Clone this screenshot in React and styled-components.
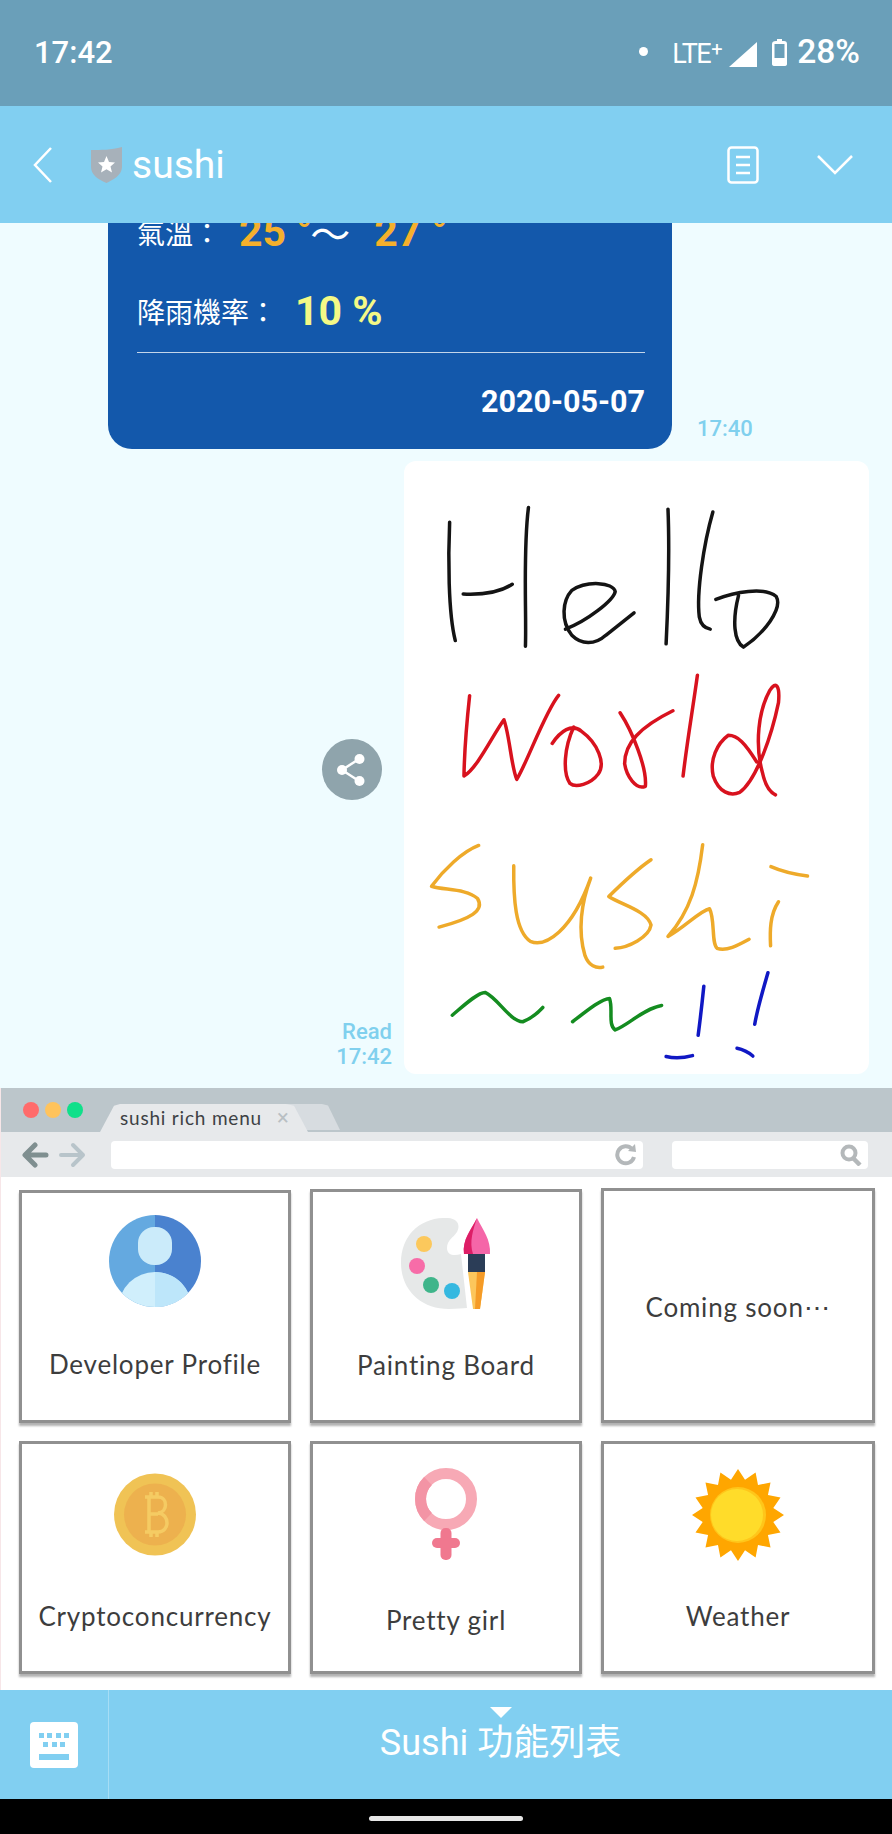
import React from "react";
import styled, { createGlobalStyle } from "styled-components";

const GlobalStyle = createGlobalStyle`
  html, body {
    margin: 0;
    padding: 0;
    background: #000;
  }
  * {
    box-sizing: border-box;
  }
`;

const LATIN = `Roboto, "Noto Sans CJK TC", sans-serif`;
const CJK = `"Noto Sans CJK TC", Roboto, sans-serif`;

//Strokes of the hand drawing, in a 1233 x 1502 space
const DRAWING = [
  {
    color: "#141414",
    strokes: [
      "M396 178 C392 260 392 400 411 468",
      "M605 142 C590 250 600 400 597 482",
      "M432 354 C480 356 530 350 562 330",
      "M703 440 C760 420 830 370 835 348 C830 325 760 320 720 345 C695 370 690 420 720 455 C745 478 780 480 810 455 L885 400",
      "M975 146 C980 260 975 380 970 476",
      "M1094 153 C1070 230 1050 350 1058 410 C1062 430 1075 438 1087 440",
      "M1102 367 C1150 350 1230 335 1262 360 C1280 390 1230 450 1175 484 C1150 470 1145 420 1162 358",
    ],
  },
  {
    color: "#d8121e",
    strokes: [
      "M449 603 C440 680 435 750 434 800 C470 780 510 700 540 662 C555 700 560 780 574 808 C600 770 650 640 685 602",
      "M668 720 C690 690 720 670 745 690 C790 720 810 770 790 795 C770 820 730 830 715 818 C695 790 700 730 725 680",
      "M848 645 C880 690 920 780 915 825 C890 835 865 800 860 770 C860 720 900 680 988 640",
      "M1053 553 C1040 640 1025 720 1015 800",
      "M1210 765 C1180 720 1160 700 1135 700 C1105 720 1085 760 1095 800 C1110 840 1140 850 1165 840 C1210 810 1250 700 1268 620 C1272 580 1262 565 1245 590 C1215 640 1205 720 1225 790 C1232 820 1245 840 1260 846",
    ],
  },
  {
    color: "#eeaa2a",
    strokes: [
      "M473 970 C430 985 380 1030 348 1070 C380 1080 440 1075 470 1100 C490 1130 450 1150 368 1170",
      "M566 1020 C565 1100 570 1180 610 1205 C650 1220 720 1180 770 1050 C745 1110 735 1180 755 1240 C765 1265 785 1272 802 1268",
      "M930 1005 C890 1030 840 1075 818 1095 C850 1115 920 1130 930 1165 C925 1195 870 1220 835 1222",
      "M1067 968 C1055 1060 1035 1130 975 1193 C1020 1170 1060 1130 1085 1125 C1100 1150 1090 1210 1105 1222 C1130 1230 1160 1215 1190 1200",
      "M1268 1108 C1245 1140 1245 1180 1247 1216",
      "M1248 1022 C1280 1035 1320 1042 1345 1045",
    ],
  },
  {
    color: "#148c20",
    strokes: [
      "M403 1386 C430 1365 470 1330 490 1330 C525 1345 555 1400 590 1402 C610 1395 630 1380 643 1367",
      "M722 1402 C760 1375 800 1345 820 1345 C830 1370 815 1410 835 1422 C870 1410 910 1370 958 1362",
    ],
  },
  {
    color: "#1018c4",
    strokes: [
      "M1070 1315 C1065 1360 1060 1400 1055 1435",
      "M970 1487 C990 1492 1020 1490 1040 1485",
      "M1240 1282 C1225 1330 1212 1370 1205 1408",
      "M1158 1467 C1175 1470 1190 1478 1200 1486",
    ],
  },
];

const sunPoints = () => {
  const pts = [];
  for (let i = 0; i < 32; i++) {
    const r = i % 2 === 0 ? 46 : 36;
    const a = (i / 32) * Math.PI * 2 - Math.PI / 2;
    pts.push(`${46 + r * Math.cos(a)},${46 + r * Math.sin(a)}`);
  }
  return pts.join(" ");
};

const ProfileIcon = () => (
  <svg width="92" height="92" viewBox="0 0 92 92">
    <defs>
      <clipPath id="avatar">
        <circle cx="46" cy="46" r="46" />
      </clipPath>
    </defs>
    <g clipPath="url(#avatar)">
      <rect width="46" height="92" fill="#64a9e0" />
      <rect x="46" width="46" height="92" fill="#4a82cf" />
      <ellipse cx="46" cy="92" rx="36" ry="35" fill="#d0effc" />
      <path d="M46 57 C66 57 82 72 82 92 L46 92 Z" fill="#bde6fa" />
    </g>
    <rect x="29" y="12" width="34" height="38" rx="16" fill="#cbebfa" />
  </svg>
);

const PaletteIcon = () => (
  <svg width="90" height="92" viewBox="0 0 90 92">
    <path
      d="M42 0 C56 -1 60 6 56 14 C52 20 46 22 46 30 C46 38 54 38 60 36 L66 90 C62 90 56 91 48 91 C20 91 0 72 0 45 C0 18 18 1 42 0 Z"
      fill="#e6e8e8"
    />
    <circle cx="23" cy="26" r="8" fill="#fcc85c" />
    <circle cx="16" cy="48" r="8" fill="#f76ca8" />
    <circle cx="30" cy="67" r="8" fill="#3fb58a" />
    <circle cx="51" cy="73" r="8" fill="#35b8e0" />
    <path d="M76 0 C82 12 90 22 89 36 L63 36 C61 22 70 12 76 0 Z" fill="#f566a8" />
    <path d="M76 0 C70 12 61 22 63 36 L72 36 C68 24 72 12 76 0 Z" fill="#dd1e66" />
    <rect x="67" y="36" width="17" height="18" fill="#2b3d57" />
    <path d="M67 54 L84 54 L79 91 L72 91 Z" fill="#fcc65c" />
    <path d="M76 54 L84 54 L79 91 L74 91 Z" fill="#f59b27" />
  </svg>
);

const CoinIcon = () => (
  <svg width="82" height="83" viewBox="0 0 82 83">
    <circle cx="41" cy="41.5" r="41" fill="#f0c355" />
    <circle cx="41" cy="41.5" r="31" fill="#edb14e" />
    <path
      d="M31 24 H44 C54 24 54 39 44 40 C56 41 56 59 44 59 H31 M35 24 V59 M35 41 H44 M37 19 V24 M43 19 V24 M37 59 V64 M43 59 V64"
      fill="none"
      stroke="#f5cb63"
      strokeWidth="3.5"
    />
  </svg>
);

const FemaleIcon = () => (
  <svg width="62" height="92" viewBox="0 0 62 92">
    <circle cx="31" cy="31" r="25.5" fill="none" stroke="#f7a9b5" strokeWidth="11" />
    <path d="M13 13 A25.5 25.5 0 0 0 13 49" fill="none" stroke="#f394a5" strokeWidth="11" />
    <rect x="25.5" y="60" width="11" height="32" rx="5" fill="#f0788f" />
    <rect x="17" y="70" width="28" height="10" rx="5" fill="#f0788f" />
  </svg>
);

const SunIcon = () => (
  <svg width="92" height="92" viewBox="0 0 92 92">
    <polygon points={sunPoints()} fill="#ffa600" />
    <circle cx="46" cy="46" r="28" fill="#ffc61a" />
    <circle cx="45" cy="46" r="26" fill="#ffdc2a" />
  </svg>
);

const Shield = () => (
  <svg width="31" height="36" viewBox="0 0 31 36">
    <path d="M0 3 C10 3 20 3 31 0 V20 C31 28 22 33 15.5 36 C8 33 0 28 0 20 Z" fill="#a7b1ba" />
    <path
      d="M15.5 9 L18 15 L24 15.500 L19.500 19.500 L21 25.500 L15.500 22.300 L10 25.500 L11.500 19.500 L7 15.500 L13 15 Z"
      fill="#fff"
    />
  </svg>
);

function App() {
  return (
    <Page>
      <GlobalStyle />
      <StatusBar>
        <Clock>17:42</Clock>
        <StatusRight>
          <Dot />
          <Lte>
            LTE<LtePlus>+</LtePlus>
          </Lte>
          <svg width="28" height="25" viewBox="0 0 28 25">
            <path d="M28 0 V25 H0 Z" fill="#fff" />
          </svg>
          <BatterySlot>
            <svg width="17" height="28" viewBox="0 0 17 28">
              <path
                d="M5 2 H6 V0 H11 V2 H13 Q16 2 16 5 V25 Q16 27 13 27 H4 Q1 27 1 25 V5 Q1 2 5 2 Z"
                fill="#fff"
              />
              <rect x="3.500" y="5" width="10" height="14" fill="#6a9fb9" />
            </svg>
          </BatterySlot>
          <Percent>28%</Percent>
        </StatusRight>
      </StatusBar>

      <Header>
        <svg width="19" height="36" viewBox="0 0 19 36">
          <path d="M18 1 L2 18 L18 35" fill="none" stroke="#fff" strokeWidth="2.500" />
        </svg>
        <ShieldSlot>
          <Shield />
        </ShieldSlot>
        <Title>sushi</Title>
        <HeaderIcons>
          <svg width="32" height="38" viewBox="0 0 32 38">
            <rect x="1.500" y="1.500" width="29" height="35" rx="3" fill="none" stroke="#fff" strokeWidth="2.500" />
            <path d="M9 11 H23 M9 19 H23 M9 27 H23" stroke="#fff" strokeWidth="2.500" />
          </svg>
          <svg width="36" height="20" viewBox="0 0 36 20">
            <path d="M1 1 L18 18 L35 1" fill="none" stroke="#fff" strokeWidth="2.500" />
          </svg>
        </HeaderIcons>
      </Header>

      <Chat>
        <WeatherRow>
          <WeatherCard>
            <TempClip>
              <TempLine>
                <Caption>氣溫：</Caption>
                <BigValue $color="#f5b02c">25 °</BigValue>
                <Wave>～</Wave>
                <BigValue $color="#f5b02c">27 °</BigValue>
              </TempLine>
            </TempClip>
            <RainLine>
              <Caption>降雨機率：</Caption>
              <BigValue $color="#f4f986">10 %</BigValue>
            </RainLine>
            <Rule />
            <DateText>2020-05-07</DateText>
          </WeatherCard>
          <Meta $left>17:40</Meta>
        </WeatherRow>

        <ImageRow>
          <SideColumn>
            <ShareButton>
              <svg width="36" height="36" viewBox="0 0 36 36">
                <path d="M25 7 L8 18 L25 29" fill="none" stroke="#fff" strokeWidth="2.500" />
                <circle cx="25.500" cy="7" r="5" fill="#fff" />
                <circle cx="8" cy="18" r="5" fill="#fff" />
                <circle cx="25.500" cy="29" r="5" fill="#fff" />
              </svg>
            </ShareButton>
            <Meta>
              Read
              <br />
              17:42
            </Meta>
          </SideColumn>
          <ImageBubble>
            <Drawing viewBox="275 28 1233 1502" preserveAspectRatio="none">
              {DRAWING.map((group) =>
                group.strokes.map((d) => (
                  <Stroke key={d} d={d} stroke={group.color} />
                ))
              )}
            </Drawing>
          </ImageBubble>
        </ImageRow>
      </Chat>

      <RichMenu>
        <TabStrip>
          <Lights>
            <Light $color="#ff6b6b" />
            <Light $color="#ffc35c" />
            <Light $color="#0fe08a" />
          </Lights>
          <Tabs>
            <GhostTab />
            <ActiveTab>
              <TabLabel>sushi rich menu</TabLabel>
              <TabClose>×</TabClose>
            </ActiveTab>
          </Tabs>
        </TabStrip>
        <Toolbar>
          <svg width="64" height="26" viewBox="0 0 64 26">
            <path d="M24 13 H4 M13 3 L3 13 L13 23" fill="none" stroke="#7f8f90" strokeWidth="5" strokeLinecap="round" strokeLinejoin="round" />
            <path d="M39 13 H61 M51 3 L61 13 L51 23" fill="none" stroke="#b8c4ca" strokeWidth="4" strokeLinecap="round" strokeLinejoin="round" />
          </svg>
          <AddressBar $width="532px">
            <svg width="22" height="22" viewBox="0 0 22 22">
              <path d="M17 5 A8.500 8.500 0 1 0 19 13" fill="none" stroke="#b4b8ba" strokeWidth="4" />
              <path d="M13 7 L21 8 L20 0 Z" fill="#b4b8ba" />
            </svg>
          </AddressBar>
          <AddressBar $width="196px">
            <svg width="22" height="22" viewBox="0 0 22 22">
              <circle cx="9" cy="9" r="6.500" fill="none" stroke="#b4b8ba" strokeWidth="4" />
              <path d="M13 14 L20 21" stroke="#b4b8ba" strokeWidth="4.500" />
            </svg>
          </AddressBar>
        </Toolbar>
        <MenuGrid>
          <MenuCard $pad="22px" $height="233px">
            <ProfileIcon />
            <CardLabel $gap="42px">Developer Profile</CardLabel>
          </MenuCard>
          <MenuCard $pad="26px" $height="234px">
            <PaletteIcon />
            <CardLabel $gap="40px">Painting Board</CardLabel>
          </MenuCard>
          <MenuCard $pad="101px" $height="235px">
            <CardLabel $gap="0">Coming soon⋯</CardLabel>
          </MenuCard>
          <MenuCard $pad="29px" $height="233px">
            <CoinIcon />
            <CardLabel $gap="45px">Cryptoconcurrency</CardLabel>
          </MenuCard>
          <MenuCard $pad="24px" $height="233px">
            <FemaleIcon />
            <CardLabel $gap="45px">Pretty girl</CardLabel>
          </MenuCard>
          <MenuCard $pad="25px" $height="233px">
            <SunIcon />
            <CardLabel $gap="40px">Weather</CardLabel>
          </MenuCard>
        </MenuGrid>
      </RichMenu>

      <BottomBar>
        <KeyboardSlot>
          <svg width="48" height="46" viewBox="0 0 48 46">
            <rect width="48" height="46" rx="4" fill="#fff" />
            <path
              d="M9 11 h5 v5 h-5 Z M17 11 h5 v5 h-5 Z M26 11 h5 v5 h-5 Z M34 11 h5 v5 h-5 Z M13 20 h5 v5 h-5 Z M22 20 h5 v5 h-5 Z M30 20 h5 v5 h-5 Z M9 32 h30 v6 h-30 Z"
              fill="#81cff1"
            />
          </svg>
        </KeyboardSlot>
        <MenuToggle>
          <Caret />
          <ToggleLabel>Sushi 功能列表</ToggleLabel>
        </MenuToggle>
      </BottomBar>

      <NavBar>
        <HomePill />
      </NavBar>
    </Page>
  );
}

const Page = styled.div`
  width: 892px;
  height: 1834px;
  display: flex;
  flex-direction: column;
  overflow: hidden;
  font-family: ${LATIN};
`;

const StatusBar = styled.div`
  height: 106px;
  flex: none;
  background: #6a9fb9;
  color: #fff;
  display: flex;
  align-items: flex-start;
  justify-content: space-between;
  padding: 36px 32px 0 34px;
`;

const Clock = styled.span`
  font-size: 31px;
  font-weight: 500;
  line-height: 34px;
`;

const StatusRight = styled.div`
  display: flex;
  align-items: flex-end;
  height: 31px;
  svg {
    flex: none;
  }
`;

const Dot = styled.span`
  width: 9px;
  height: 9px;
  border-radius: 50%;
  background: #fff;
  margin: 0 24px 11px 0;
`;

const Lte = styled.span`
  flex: none;
  display: flex;
  align-items: flex-start;
  font-size: 27px;
  line-height: 31px;
  letter-spacing: -1.5px;
  margin: 0 7px -3px 0;
  width: 50px;
`;

const LtePlus = styled.span`
  font-size: 20px;
  line-height: 20px;
  margin-left: 1px;
`;

const BatterySlot = styled.span`
  display: flex;
  margin-left: 14px;
`;

const Percent = styled.span`
  font-size: 33.5px;
  font-weight: 500;
  line-height: 31px;
  margin-left: 9px;
`;

const Header = styled.div`
  height: 117px;
  flex: none;
  background: #81cff1;
  display: flex;
  align-items: center;
  padding: 0 40px 0 33px;
`;

const ShieldSlot = styled.div`
  display: flex;
  margin-left: 39px;
`;

const Title = styled.span`
  color: #fff;
  font-size: 39px;
  line-height: 44px;
  margin-left: 10px;
`;

const HeaderIcons = styled.div`
  margin-left: auto;
  display: flex;
  align-items: center;
  gap: 58px;
  margin-right: -1px;
`;

const Chat = styled.div`
  flex: none;
  height: 865px;
  background: #effcff;
  display: flex;
  flex-direction: column;
  gap: 12px;
  overflow: hidden;
`;

const WeatherRow = styled.div`
  display: flex;
  align-items: flex-end;
  padding-left: 108px;
`;

const WeatherCard = styled.div`
  width: 564px;
  height: 226px;
  background: #1358ab;
  border-radius: 0 0 24px 24px;
  padding: 0 27px 0 29px;
  color: #fff;
`;

const TempClip = styled.div`
  height: 23px;
  overflow: hidden;
`;

const TempLine = styled.div`
  display: flex;
  align-items: center;
  height: 40px;
  margin-top: -11px;
`;

const RainLine = styled.div`
  display: flex;
  align-items: center;
  height: 40px;
  margin-top: 45px;
`;

const Caption = styled.span`
  font-family: ${CJK};
  font-size: 28px;
  line-height: 40px;
  flex: none;
  margin-right: 18px;
`;

const BigValue = styled.span`
  color: ${(props) => props.$color};
  font-size: 41px;
  font-weight: 700;
  line-height: 40px;
  flex: none;
`;

const Wave = styled.span`
  font-family: ${CJK};
  font-size: 40px;
  line-height: 40px;
  flex: none;
  margin: 0 24px 0 -2px;
`;

const Rule = styled.div`
  height: 1px;
  background: rgba(255, 255, 255, 0.75);
  margin-top: 21px;
`;

const DateText = styled.div`
  font-size: 30.5px;
  font-weight: 700;
  line-height: 36px;
  text-align: right;
  margin-top: 31px;
`;

const Meta = styled.div`
  color: #80d0ee;
  font-size: 22px;
  font-weight: 500;
  line-height: 25px;
  text-align: right;
  margin: ${(props) => (props.$left ? "0 0 8px 25px" : "auto 0 5px 0")};
`;

const ImageRow = styled.div`
  display: flex;
  justify-content: flex-end;
  padding-right: 23px;
  gap: 12px;
`;

const SideColumn = styled.div`
  display: flex;
  flex-direction: column;
  align-items: flex-end;
`;

const ShareButton = styled.div`
  width: 60px;
  height: 61px;
  border-radius: 50%;
  background: #8fa4ac;
  display: flex;
  align-items: center;
  justify-content: center;
  margin: 278px 10px 0 0;
`;

const ImageBubble = styled.div`
  width: 465px;
  height: 613px;
  background: #fff;
  border-radius: 12px;
`;

const Drawing = styled.svg`
  display: block;
  width: 100%;
  height: 100%;
`;

const Stroke = styled.path.attrs({ vectorEffect: "non-scaling-stroke" })`
  fill: none;
  stroke-width: 3.5px;
  stroke-linecap: round;
  stroke-linejoin: round;
`;

const RichMenu = styled.div`
  flex: none;
  height: 602px;
  background: #fff;
  border-left: 1px solid #f7e6e8;
  display: flex;
  flex-direction: column;
`;

const TabStrip = styled.div`
  height: 44px;
  flex: none;
  background: #bcc6cb;
  display: flex;
  align-items: flex-end;
`;

const Lights = styled.div`
  display: flex;
  gap: 6px;
  padding: 0 0 14px 22px;
`;

const Light = styled.span`
  width: 16px;
  height: 16px;
  border-radius: 50%;
  background: ${(props) => props.$color};
`;

const Tabs = styled.div`
  position: relative;
  margin-left: 17px;
  width: 240px;
  height: 28px;
`;

const ActiveTab = styled.div`
  position: absolute;
  left: 0;
  top: 0;
  width: 208px;
  height: 28px;
  background: #e7e9eb;
  clip-path: polygon(0 100%, 14px 6%, 20px 0, 186px 0, 194px 6%, 208px 100%);
  display: flex;
  align-items: center;
  padding-left: 20px;
`;

const GhostTab = styled.div`
  position: absolute;
  left: 186px;
  top: 0;
  width: 54px;
  height: 26px;
  background: #d7dce0;
  clip-path: polygon(14px 100%, 0 0, 36px 0, 42px 6%, 54px 100%);
`;

const TabLabel = styled.span`
  font-family: Lato, sans-serif;
  font-size: 19px;
  letter-spacing: 0.8px;
  color: #3d4144;
  line-height: 24px;
`;

const TabClose = styled.span`
  font-size: 22px;
  line-height: 24px;
  color: #b9bfc3;
  margin-left: 15px;
`;

const Toolbar = styled.div`
  height: 45px;
  flex: none;
  background: #e7e9eb;
  display: flex;
  align-items: center;
  padding-left: 21px;
`;

const AddressBar = styled.div`
  width: ${(props) => props.$width};
  height: 28px;
  background: #fff;
  border-radius: 4px;
  display: flex;
  align-items: center;
  justify-content: flex-end;
  padding-right: 6px;
  margin-left: 25px;
  & + & {
    margin-left: 29px;
  }
`;

const MenuGrid = styled.div`
  display: grid;
  grid-template-columns: 272px 272px 274px;
  grid-template-rows: 235px 233px;
  column-gap: 19px;
  row-gap: 18px;
  padding: 11px 0 0 18px;
`;

const MenuCard = styled.div`
  height: ${(props) => props.$height};
  align-self: end;
  border: 3px solid #909090;
  box-shadow: 0 3px 2px rgba(0, 0, 0, 0.3);
  background: #fff;
  display: flex;
  flex-direction: column;
  align-items: center;
  padding-top: ${(props) => props.$pad};
  svg {
    flex: none;
  }
`;

const CardLabel = styled.div`
  font-family: Lato, sans-serif;
  font-size: 26px;
  line-height: 30px;
  color: #3d3d3d;
  letter-spacing: 0.8px;
  margin-top: ${(props) => props.$gap};
  white-space: nowrap;
`;

const BottomBar = styled.div`
  height: 109px;
  flex: none;
  background: #81cff1;
  display: flex;
`;

const KeyboardSlot = styled.div`
  width: 109px;
  flex: none;
  border-right: 1px solid #a6ddf5;
  display: flex;
  align-items: center;
  padding: 0 0 0 30px;
`;

const MenuToggle = styled.div`
  flex: 1;
  display: flex;
  flex-direction: column;
  align-items: center;
  padding-top: 17px;
`;

const Caret = styled.span`
  width: 0;
  height: 0;
  border-left: 11px solid transparent;
  border-right: 11px solid transparent;
  border-top: 11px solid #fff;
`;

const ToggleLabel = styled.div`
  color: #fff;
  font-family: ${LATIN};
  font-size: 36px;
  line-height: 44px;
  margin-top: 3px;
`;

const NavBar = styled.div`
  flex: 1;
  background: #000;
  display: flex;
  justify-content: center;
  padding-top: 17px;
`;

const HomePill = styled.span`
  width: 154px;
  height: 5px;
  border-radius: 3px;
  background: #e6e6e6;
`;

export default App;
